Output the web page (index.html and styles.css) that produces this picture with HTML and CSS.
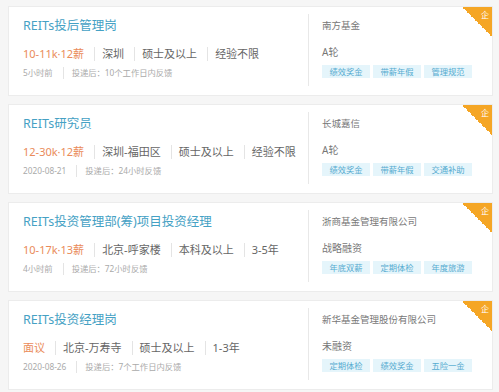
FILE: index.html
```html
<!DOCTYPE html>
<html lang="zh-CN">
<head>
    <meta charset="UTF-8">
    <meta name="viewport" content="width=device-width, initial-scale=1.0">
    <title>REITs 职位列表</title>
    <link rel="stylesheet" href="styles.css">
</head>
<body>
    <div class="job-list">
        <div class="job-card">
            <div class="job-main">
                <div class="job-title">REITs投后管理岗</div>
                <div class="job-req">
                    <span class="salary">10-11k·12薪</span>
                    <span class="req-item">深圳</span>
                    <span class="req-item">硕士及以上</span>
                    <span class="req-item">经验不限</span>
                </div>
                <div class="job-meta">
                    <span>5小时前</span>
                    <span class="meta-item">投递后：10个工作日内反馈</span>
                </div>
            </div>
            <div class="company">
                <div class="company-name">南方基金</div>
                <div class="company-stage">A轮</div>
                <div class="tags">
                    <span class="tag">绩效奖金</span>
                    <span class="tag">带薪年假</span>
                    <span class="tag">管理规范</span>
                </div>
            </div>
            <div class="corner"><span>企</span></div>
        </div>

        <div class="job-card">
            <div class="job-main">
                <div class="job-title">REITs研究员</div>
                <div class="job-req">
                    <span class="salary">12-30k·12薪</span>
                    <span class="req-item">深圳-福田区</span>
                    <span class="req-item">硕士及以上</span>
                    <span class="req-item">经验不限</span>
                </div>
                <div class="job-meta">
                    <span>2020-08-21</span>
                    <span class="meta-item">投递后：24小时反馈</span>
                </div>
            </div>
            <div class="company">
                <div class="company-name">长城嘉信</div>
                <div class="company-stage">A轮</div>
                <div class="tags">
                    <span class="tag">绩效奖金</span>
                    <span class="tag">带薪年假</span>
                    <span class="tag">交通补助</span>
                </div>
            </div>
            <div class="corner"><span>企</span></div>
        </div>

        <div class="job-card">
            <div class="job-main">
                <div class="job-title">REITs投资管理部(筹)项目投资经理</div>
                <div class="job-req">
                    <span class="salary">10-17k·13薪</span>
                    <span class="req-item">北京-呼家楼</span>
                    <span class="req-item">本科及以上</span>
                    <span class="req-item">3-5年</span>
                </div>
                <div class="job-meta">
                    <span>4小时前</span>
                    <span class="meta-item">投递后：72小时反馈</span>
                </div>
            </div>
            <div class="company">
                <div class="company-name">浙商基金管理有限公司</div>
                <div class="company-stage">战略融资</div>
                <div class="tags">
                    <span class="tag">年底双薪</span>
                    <span class="tag">定期体检</span>
                    <span class="tag">年度旅游</span>
                </div>
            </div>
            <div class="corner"><span>企</span></div>
        </div>

        <div class="job-card">
            <div class="job-main">
                <div class="job-title">REITs投资经理岗</div>
                <div class="job-req">
                    <span class="salary">面议</span>
                    <span class="req-item">北京-万寿寺</span>
                    <span class="req-item">硕士及以上</span>
                    <span class="req-item">1-3年</span>
                </div>
                <div class="job-meta">
                    <span>2020-08-26</span>
                    <span class="meta-item">投递后：7个工作日内反馈</span>
                </div>
            </div>
            <div class="company">
                <div class="company-name">新华基金管理股份有限公司</div>
                <div class="company-stage">未融资</div>
                <div class="tags">
                    <span class="tag">定期体检</span>
                    <span class="tag">绩效奖金</span>
                    <span class="tag">五险一金</span>
                </div>
            </div>
            <div class="corner"><span>企</span></div>
        </div>
    </div>
</body>
</html>
```

FILE: styles.css
```css
body {
    margin: 0;
    padding: 0;
    background-color: #f6f6f6;
    font-family: "Noto Sans", "Noto Sans CJK SC", sans-serif;
    color: #666;
}

.job-list {
    display: flex;
    flex-direction: column;
    gap: 8px;
    padding: 6px 6px 0 8px;
}

.job-card {
    position: relative;
    display: flex;
    height: 90px;
    box-sizing: border-box;
    background-color: #fff;
    border: 1px solid #ececec;
    overflow: hidden;
}

.job-main {
    width: 299px;
    box-sizing: border-box;
    padding: 11px 0 0 14px;
}

.job-title {
    font-size: 12.5px;
    line-height: 16px;
    color: #45a1c4;
}

.job-req {
    display: flex;
    align-items: center;
    margin-top: 13px;
    font-size: 11px;
    line-height: 14px;
}

.salary {
    color: #ea8b5a;
}

.req-item {
    margin-left: 10px;
    padding-left: 7px;
    border-left: 1px solid #e4e4e4;
}

.job-meta {
    display: flex;
    align-items: center;
    margin-top: 6px;
    font-size: 8.3px;
    line-height: 12px;
    color: #aaa;
}

.meta-item {
    margin-left: 10px;
    padding-left: 8px;
    border-left: 1px solid #e4e4e4;
}

.company {
    flex: 1;
    margin: 7px 0 9px;
    padding: 5px 0 0 13px;
    border-left: 1px solid #e8e8e8;
}

.company-name {
    font-size: 9.5px;
    line-height: 14px;
    color: #777;
}

.company-stage {
    margin-top: 12px;
    font-size: 10px;
    line-height: 14px;
    color: #777;
}

.tags {
    display: flex;
    gap: 3px;
    margin-top: 6px;
}

.tag {
    width: 48px;
    height: 13px;
    line-height: 13px;
    text-align: center;
    font-size: 8.3px;
    color: #55abd0;
    background-color: #e5f5fb;
}

.corner {
    position: absolute;
    top: 0;
    right: 0;
    width: 30px;
    height: 30px;
    background: linear-gradient(to bottom left, #f5a625 50%, transparent 50%);
}

.corner span {
    position: absolute;
    top: 3px;
    right: 3px;
    font-size: 8px;
    line-height: 10px;
    color: #fff;
}
```
